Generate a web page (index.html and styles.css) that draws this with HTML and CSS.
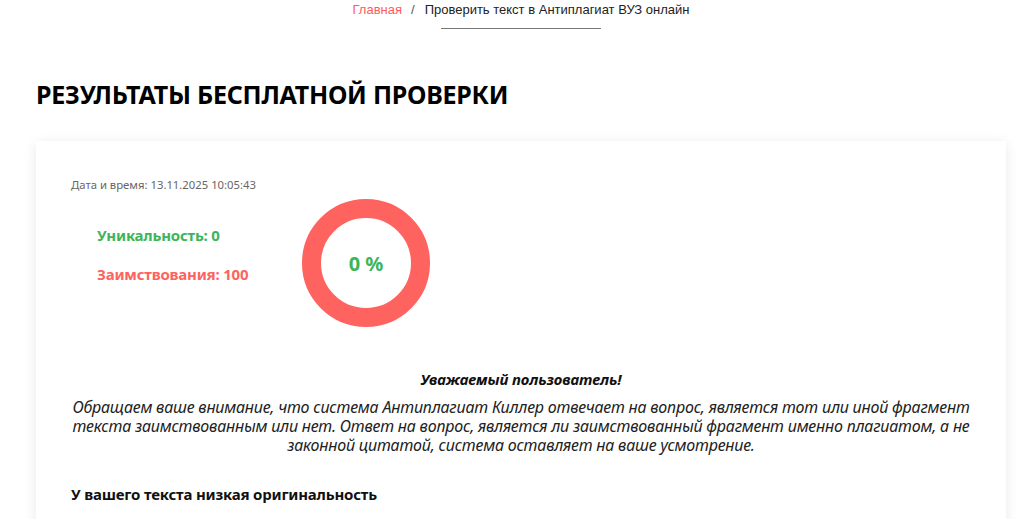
FILE: index.html
```html
<!DOCTYPE html>
<html lang="ru">
<head>
<meta charset="utf-8">
<link rel="stylesheet" href="styles.css">
</head>
<body>
<nav class="crumbs">
  <div class="crumbs-row"><a class="crumb-link" href="#">Главная</a><span class="sep">/</span><span class="crumb-current">Проверить текст в Антиплагиат ВУЗ онлайн</span></div>
  <div class="crumb-line"></div>
</nav>
<h1 class="title">РЕЗУЛЬТАТЫ БЕСПЛАТНОЙ ПРОВЕРКИ</h1>
<section class="card">
  <div class="date">Дата и время: 13.11.2025 10:05:43</div>
  <div class="summary">
    <div class="stats">
      <div class="stat stat-green">Уникальность: 0</div>
      <div class="stat stat-red">Заимствования: 100</div>
    </div>
    <div class="donut">
      <svg width="128" height="128" viewBox="0 0 128 128">
        <circle cx="64" cy="64" r="54.5" fill="none" stroke="#ff6360" stroke-width="19"/>
      </svg>
      <span class="donut-label">0 %</span>
    </div>
  </div>
  <div class="notice">
    <div class="notice-title">Уважаемый пользователь!</div>
    <p class="notice-text">Обращаем ваше внимание, что система Антиплагиат Киллер отвечает на вопрос, является тот или иной фрагмент текста заимствованным или нет. Ответ на вопрос, является ли заимствованный фрагмент именно плагиатом, а не законной цитатой, система оставляет на ваше усмотрение.</p>
  </div>
  <h2 class="verdict">У вашего текста низкая оригинальность</h2>
</section>
</body>
</html>
```
FILE: styles.css
```css
html, body {
  margin: 0;
  padding: 0;
  background: #fff;
  overflow: hidden;
}
body {
  font-family: "Noto Sans", "Open Sans", sans-serif;
  color: #111;
  height: 519px;
}
.crumbs {
  display: flex;
  flex-direction: column;
  align-items: center;
  padding-top: 1px;
  padding-left: 18px;
}
.crumbs-row {
  font-family: "Liberation Sans", Arial, sans-serif;
  font-size: 13px;
  line-height: 18px;
  color: #222;
}
.crumb-link {
  color: #ff5c5c;
  text-decoration: none;
}
.sep {
  color: #555;
  margin: 0 10px 0 9px;
}
.crumb-line {
  width: 160px;
  height: 1px;
  background: #777;
  margin-top: 9px;
}
.title {
  margin: 49px 0 0 36px;
  font-size: 25px;
  line-height: 32px;
  font-weight: 700;
  color: #000;
  letter-spacing: -0.25px;
}
.card {
  margin: 31px 18px 0 36px;
  background: #fff;
  box-shadow: 0 2px 12px rgba(0, 0, 0, 0.09);
  padding: 36px 35px 20px 35px;
  min-height: 400px;
}
.date {
  font-size: 11.3px;
  color: #666;
  line-height: 16px;
}
.summary {
  display: flex;
  align-items: center;
  margin-top: 6px;
}
.stats {
  width: 205px;
  padding-left: 26px;
  display: flex;
  flex-direction: column;
  gap: 20px;
  margin-top: -17px;
}
.stat {
  font-size: 15px;
  font-weight: 700;
  line-height: 19px;
  letter-spacing: -0.2px;
}
.stat-green { color: #3cb55a; }
.stat-red { color: #ff6360; }
.donut {
  position: relative;
  width: 128px;
  height: 128px;
}
.donut svg { display: block; }
.donut-label {
  position: absolute;
  inset: 0;
  display: flex;
  align-items: center;
  justify-content: center;
  font-size: 20px;
  font-weight: 700;
  color: #3cb55a;
}
.notice {
  text-align: center;
  font-style: italic;
  margin-top: 42px;
}
.notice-title {
  font-weight: 700;
  font-size: 15px;
  line-height: 20px;
  letter-spacing: -0.1px;
}
.notice-text {
  margin: 9px 0 0;
  font-size: 16px;
  line-height: 19px;
  color: #222;
  letter-spacing: -0.2px;
}
.verdict {
  margin: 29px 0 0;
  font-size: 15px;
  font-weight: 700;
  line-height: 20px;
  letter-spacing: -0.2px;
}
```
